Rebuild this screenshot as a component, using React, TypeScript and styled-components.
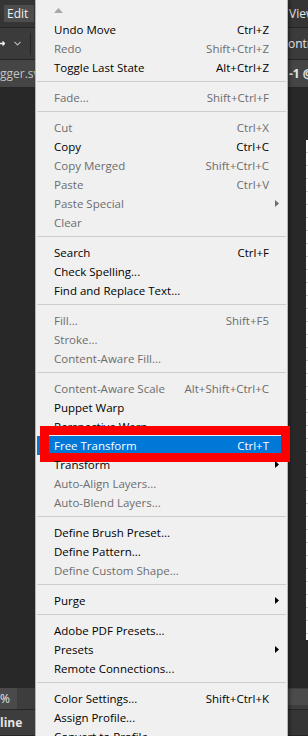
import React from 'react'
import styled, { createGlobalStyle } from 'styled-components'

const GlobalStyle = createGlobalStyle`
  html, body {
    margin: 0;
    padding: 0;
    background: #282828;
  }
  * {
    box-sizing: border-box;
  }
`

const Screen = styled.div`
  position: relative;
  width: 308px;
  height: 736px;
  overflow: hidden;
  display: flex;
  flex-direction: column;
  background: #282828;
  font-family: 'Open Sans', 'Noto Sans', sans-serif;
`

// background rows of the app: left strip | area under the menu | right strip
const BgRow = styled.div<{ $h?: number; $bg: string; $grow?: boolean }>`
  display: grid;
  grid-template-columns: 35px 253px 20px;
  height: ${p => (p.$h ? `${p.$h}px` : 'auto')};
  flex: ${p => (p.$grow ? '1' : 'none')};
  background: ${p => p.$bg};
  border-bottom: 1px solid #262626;
`

const LeftCell = styled.div<{ $bg?: string }>`
  display: flex;
  align-items: center;
  overflow: hidden;
  white-space: nowrap;
  background: ${p => p.$bg || 'transparent'};
`

const RightCell = styled.div<{ $pad?: number; $bg?: string }>`
  grid-column: 3;
  display: flex;
  align-items: center;
  overflow: hidden;
  white-space: nowrap;
  padding-left: ${p => p.$pad || 0}px;
  background: ${p => p.$bg || 'transparent'};
`

const BarMenu = styled.div<{ $active?: boolean }>`
  height: 17px;
  width: 30px;
  margin-left: ${p => (p.$active ? 4 : 0)}px;
  padding-left: 3px;
  display: flex;
  align-items: center;
  font-size: 12px;
  color: #f0f0f0;
  background: ${p => (p.$active ? '#4d4d4d' : 'transparent')};
`

const DarkText = styled.span<{ $bold?: boolean; $color?: string }>`
  font-size: 12px;
  font-weight: ${p => (p.$bold ? 700 : 400)};
  color: ${p => p.$color || '#e6e6e6'};
`

const ToolGlyph = styled.svg<{ $gap: number }>`
  flex: none;
  margin-right: ${p => p.$gap}px;
`

const Divider = styled.div`
  width: 1px;
  height: 22px;
  background: #262626;
`

const PercentBox = styled.div`
  width: 17px;
  height: 100%;
  display: flex;
  align-items: center;
  background: #4a4a4a;
`

const StatusBand = styled.div`
  width: 100%;
  height: 16px;
  background: #4b4b4b;
  align-self: flex-start;
  margin-top: 1px;
`

const DocStrip = styled.div`
  width: 2px;
  height: 500px;
  margin-top: 52px;
  margin-left: 18px;
  align-self: flex-start;
  background: repeating-linear-gradient(to bottom, #ffffff 0 12px, #d2d2d2 12px 13px);
`

// the dropdown menu, lying over the app
const Menu = styled.div`
  position: absolute;
  top: 0;
  left: 35px;
  width: 253px;
  padding: 0 1px;
  background: #f0f0f0;
  border-left: 1px solid #b4b4b4;
  border-right: 1px solid #b4b4b4;
  box-shadow: 2px 0 3px rgba(0, 0, 0, 0.35);
`

const ScrollUp = styled.div`
  height: 20px;
  padding-left: 17px;
  display: flex;
  align-items: center;
`

const Item = styled.div<{ $disabled?: boolean; $active?: boolean }>`
  position: relative;
  height: 19px;
  display: flex;
  align-items: center;
  padding-left: 17px;
  font-size: 11.5px;
  line-height: 19px;
  white-space: nowrap;
  color: ${p => (p.$active ? '#ffffff' : p.$disabled ? '#6d6d6d' : '#000000')};
  background: ${p => (p.$active ? '#0078d7' : 'transparent')};
`

const Label = styled.span`
  flex: 1;
`

const Shortcut = styled.span`
  text-align: right;
`

const ArrowCell = styled.span`
  width: 17px;
  height: 19px;
  display: flex;
  align-items: center;
  padding-left: 6px;
`

const Separator = styled.div`
  height: 11px;
  padding-top: 4px;
  &:before {
    content: '';
    display: block;
    height: 1px;
    background: #cdcdcd;
  }
`

const Annotation = styled.div`
  position: absolute;
  left: 3px;
  right: -4px;
  top: -10px;
  bottom: -7px;
  border: 9px solid #ff0000;
  pointer-events: none;
`

type Entry =
  | 'sep'
  | { label: string; shortcut?: string; disabled?: boolean; sub?: boolean; active?: boolean }

const entries: Entry[] = [
  { label: 'Undo Move', shortcut: 'Ctrl+Z' },
  { label: 'Redo', shortcut: 'Shift+Ctrl+Z', disabled: true },
  { label: 'Toggle Last State', shortcut: 'Alt+Ctrl+Z' },
  'sep',
  { label: 'Fade...', shortcut: 'Shift+Ctrl+F', disabled: true },
  'sep',
  { label: 'Cut', shortcut: 'Ctrl+X', disabled: true },
  { label: 'Copy', shortcut: 'Ctrl+C' },
  { label: 'Copy Merged', shortcut: 'Shift+Ctrl+C', disabled: true },
  { label: 'Paste', shortcut: 'Ctrl+V', disabled: true },
  { label: 'Paste Special', disabled: true, sub: true },
  { label: 'Clear', disabled: true },
  'sep',
  { label: 'Search', shortcut: 'Ctrl+F' },
  { label: 'Check Spelling...' },
  { label: 'Find and Replace Text...' },
  'sep',
  { label: 'Fill...', shortcut: 'Shift+F5', disabled: true },
  { label: 'Stroke...', disabled: true },
  { label: 'Content-Aware Fill...', disabled: true },
  'sep',
  { label: 'Content-Aware Scale', shortcut: 'Alt+Shift+Ctrl+C', disabled: true },
  { label: 'Puppet Warp' },
  { label: 'Perspective Warp' },
  { label: 'Free Transform', shortcut: 'Ctrl+T', active: true },
  { label: 'Transform', sub: true },
  { label: 'Auto-Align Layers...', disabled: true },
  { label: 'Auto-Blend Layers...', disabled: true },
  'sep',
  { label: 'Define Brush Preset...' },
  { label: 'Define Pattern...' },
  { label: 'Define Custom Shape...', disabled: true },
  'sep',
  { label: 'Purge', sub: true },
  'sep',
  { label: 'Adobe PDF Presets...' },
  { label: 'Presets', sub: true },
  { label: 'Remote Connections...' },
  'sep',
  { label: 'Color Settings...', shortcut: 'Shift+Ctrl+K' },
  { label: 'Assign Profile...' },
  { label: 'Convert to Profile...' },
]

const SubArrow = ({ color }: { color: string }) => (
  <svg width="4" height="7" viewBox="0 0 4 7">
    <path d="M0 0 L4 3.5 L0 7 Z" fill={color} />
  </svg>
)

const App: React.FunctionComponent = () => {
  return (
    <>
      <GlobalStyle />
      <Screen>
        <BgRow $h={28} $bg="#353535">
          <LeftCell>
            <BarMenu $active>Edit</BarMenu>
          </LeftCell>
          <RightCell $pad={1}>
            <DarkText>View</DarkText>
          </RightCell>
        </BgRow>
        <BgRow $h={32} $bg="#3b3b3b">
          <LeftCell>
            <ToolGlyph $gap={9} width="5" height="7" viewBox="0 0 5 7">
              <path d="M0 3.5 H4.5 M2.5 1.5 L4.5 3.5 L2.5 5.5" stroke="#f2f2f2" strokeWidth="1.3" fill="none" />
            </ToolGlyph>
            <ToolGlyph $gap={9} width="7" height="5" viewBox="0 0 7 5">
              <path d="M0.5 0.8 L3.5 4 L6.5 0.8" stroke="#b8b8b8" strokeWidth="1.1" fill="none" />
            </ToolGlyph>
            <Divider />
          </LeftCell>
          <RightCell>
            <DarkText>ontrols</DarkText>
          </RightCell>
        </BgRow>
        <BgRow $h={28} $bg="#454545">
          <LeftCell>
            <DarkText $color="#c4c4c4">gger.svg</DarkText>
          </LeftCell>
          <RightCell $pad={1}>
            <DarkText $bold>-1 @ 66.7%</DarkText>
          </RightCell>
        </BgRow>
        <BgRow $grow $bg="#282828">
          <LeftCell />
          <RightCell>
            <DocStrip />
          </RightCell>
        </BgRow>
        <BgRow $h={22} $bg="#3d3d3d">
          <LeftCell>
            <PercentBox>
              <DarkText>%</DarkText>
            </PercentBox>
          </LeftCell>
          <RightCell>
            <StatusBand />
          </RightCell>
        </BgRow>
        <BgRow $h={26} $bg="#353535">
          <LeftCell $bg="#3d3d3d">
            <DarkText $bold>line</DarkText>
          </LeftCell>
        </BgRow>

        <Menu>
          <ScrollUp>
            <svg width="9" height="5" viewBox="0 0 9 5">
              <path d="M0 5 L4.5 0 L9 5 Z" fill="#a8a8a8" />
            </svg>
          </ScrollUp>
          {entries.map((e, i) =>
            e === 'sep' ? (
              <Separator key={i} />
            ) : (
              <Item key={i} $disabled={e.disabled} $active={e.active}>
                <Label>{e.label}</Label>
                {e.shortcut && <Shortcut>{e.shortcut}</Shortcut>}
                <ArrowCell>
                  {e.sub && <SubArrow color={e.disabled ? '#6d6d6d' : '#000000'} />}
                </ArrowCell>
                {e.active && <Annotation />}
              </Item>
            )
          )}
        </Menu>
      </Screen>
    </>
  )
}

export default App
